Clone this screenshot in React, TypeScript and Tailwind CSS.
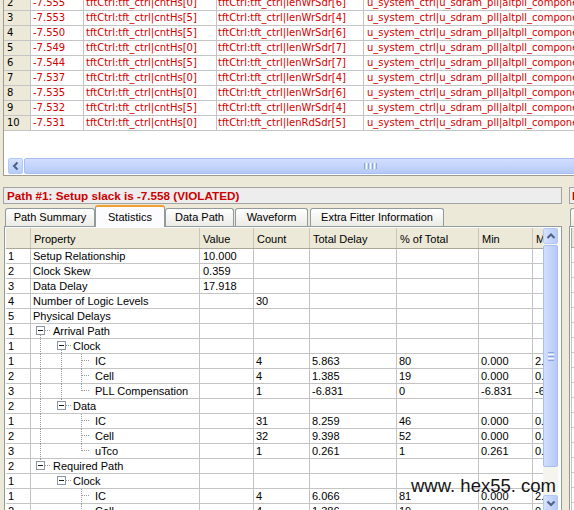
import React from 'react';

// top list of failing paths (scrolled so that row 2 is half hidden)
const topRows = [
  ['2', '-7.555', 'tftCtrl:tft_ctrl|cntHs[0]', 'tftCtrl:tft_ctrl|lenWrSdr[6]'],
  ['3', '-7.553', 'tftCtrl:tft_ctrl|cntHs[5]', 'tftCtrl:tft_ctrl|lenWrSdr[4]'],
  ['4', '-7.550', 'tftCtrl:tft_ctrl|cntHs[5]', 'tftCtrl:tft_ctrl|lenWrSdr[6]'],
  ['5', '-7.549', 'tftCtrl:tft_ctrl|cntHs[0]', 'tftCtrl:tft_ctrl|lenWrSdr[7]'],
  ['6', '-7.544', 'tftCtrl:tft_ctrl|cntHs[5]', 'tftCtrl:tft_ctrl|lenWrSdr[7]'],
  ['7', '-7.537', 'tftCtrl:tft_ctrl|cntHs[0]', 'tftCtrl:tft_ctrl|lenWrSdr[4]'],
  ['8', '-7.535', 'tftCtrl:tft_ctrl|cntHs[0]', 'tftCtrl:tft_ctrl|lenWrSdr[6]'],
  ['9', '-7.532', 'tftCtrl:tft_ctrl|cntHs[5]', 'tftCtrl:tft_ctrl|lenWrSdr[4]'],
  ['10', '-7.531', 'tftCtrl:tft_ctrl|cntHs[0]', 'tftCtrl:tft_ctrl|lenRdSdr[5]'],
];

type Seg = [number, number, number];
type StatRow = {
  n: string;
  label: string;
  lvl?: 1 | 2 | 3;
  segs?: Seg[];
  v?: string;
  c?: string;
  t?: string;
  p?: string;
  mn?: string;
  mx?: string;
};

// x of the guide lines: 9.5 (level 1), 30.5 (level 2), 50.5 (leaves)
const stats: StatRow[] = [
  { n: '1', label: 'Setup Relationship', v: '10.000' },
  { n: '2', label: 'Clock Skew', v: '0.359' },
  { n: '3', label: 'Data Delay', v: '17.918' },
  { n: '4', label: 'Number of Logic Levels', c: '30' },
  { n: '5', label: 'Physical Delays' },
  { n: '1', label: 'Arrival Path', lvl: 1, segs: [[9.5, 11, 15]] },
  { n: '1', label: 'Clock', lvl: 2, segs: [[9.5, 0, 15], [30.5, 11, 15]] },
  { n: '1', label: 'IC', lvl: 3, segs: [[9.5, 0, 15], [30.5, 0, 15], [50.5, 0, 15]], c: '4', t: '5.863', p: '80', mn: '0.000', mx: '2.196' },
  { n: '2', label: 'Cell', lvl: 3, segs: [[9.5, 0, 15], [30.5, 0, 15], [50.5, 0, 15]], c: '4', t: '1.385', p: '19', mn: '0.000', mx: '0.653' },
  { n: '3', label: 'PLL Compensation', lvl: 3, segs: [[9.5, 0, 15], [30.5, 0, 15], [50.5, 0, 7]], c: '1', t: '-6.831', p: '0', mn: '-6.831', mx: '-6.831' },
  { n: '2', label: 'Data', lvl: 2, segs: [[9.5, 0, 15], [30.5, 0, 2]] },
  { n: '1', label: 'IC', lvl: 3, segs: [[9.5, 0, 15], [50.5, 0, 15]], c: '31', t: '8.259', p: '46', mn: '0.000', mx: '0.910' },
  { n: '2', label: 'Cell', lvl: 3, segs: [[9.5, 0, 15], [50.5, 0, 15]], c: '32', t: '9.398', p: '52', mn: '0.000', mx: '0.651' },
  { n: '3', label: 'uTco', lvl: 3, segs: [[9.5, 0, 15], [50.5, 0, 7]], c: '1', t: '0.261', p: '1', mn: '0.261', mx: '0.261' },
  { n: '2', label: 'Required Path', lvl: 1, segs: [[9.5, 0, 2]] },
  { n: '1', label: 'Clock', lvl: 2, segs: [] },
  { n: '1', label: 'IC', lvl: 3, segs: [[50.5, 0, 15]], c: '4', t: '6.066', p: '81', mn: '0.000', mx: '2.196' },
  { n: '2', label: 'Cell', lvl: 3, segs: [[50.5, 0, 7]], c: '4', t: '1.386', p: '19', mn: '0.000', mx: '0.653' },
];

const tabs = [
  { label: 'Path Summary', w: 'w-[90px]' },
  { label: 'Statistics', w: 'w-[70px]', active: true },
  { label: 'Data Path', w: 'w-[69px]' },
  { label: 'Waveform', w: 'w-[73px] ml-[1px]' },
  { label: 'Extra Fitter Information', w: 'w-[134px] ml-[2px]' },
];

const statCols = 'grid grid-cols-[25px_169px_54px_56px_87px_82px_54px_40px]';

function Tree({ lvl, segs }: { lvl: 1 | 2 | 3; segs: Seg[] }) {
  const w = lvl === 1 ? 22 : lvl === 2 ? 42 : 64;
  const bx = lvl === 1 ? 5.5 : 26.5;
  return (
    <svg width={w} height={14} className="shrink-0 overflow-visible">
      {segs.map(([x, y1, y2], i) => (
        <line key={i} x1={x} y1={y1} x2={x} y2={y2} stroke="#9a9a9a" strokeDasharray="1 1" />
      ))}
      {lvl < 3 ? (
        <>
          <line x1={bx + 8.5} y1={6.5} x2={bx + 14} y2={6.5} stroke="#9a9a9a" strokeDasharray="1 1" />
          <rect x={bx} y={2.5} width={8} height={8} fill="#fff" stroke="#8a96a3" />
          <line x1={bx + 1.5} y1={6.5} x2={bx + 6.5} y2={6.5} stroke="#1a1a1a" />
        </>
      ) : (
        <line x1={51} y1={6.5} x2={59} y2={6.5} stroke="#9a9a9a" strokeDasharray="1 1" />
      )}
    </svg>
  );
}

function Chevron({ dir }: { dir: 'up' | 'down' | 'left' }) {
  const pts = dir === 'up' ? '3.5,9 7,5.5 10.5,9' : dir === 'down' ? '3.5,5.5 7,9 10.5,5.5' : '8.5,3.5 5,7 8.5,10.5';
  return (
    <svg width={13} height={14} viewBox="0 0 13 14">
      <polyline points={pts} fill="none" stroke="#4d6185" strokeWidth={2} />
    </svg>
  );
}

function HScrollbar() {
  return (
    <div className="h-[16px] mb-[1px] flex overflow-hidden">
      <div className="ml-[4px] w-[15px] h-[16px] shrink-0 rounded-[2px] border border-[#b3c8f4] bg-gradient-to-b from-[#d6e2fe] to-[#b7cbf7] flex items-center justify-center">
        <Chevron dir="left" />
      </div>
      <div className="ml-[1px] w-[692px] h-[16px] shrink-0 rounded-[2px] border border-[#a9bff2] bg-gradient-to-b from-[#d2defe] to-[#b6caf7] flex items-center justify-center gap-[1px]">
        <span className="w-[1px] h-[6px] bg-[#8ba7e3]" />
        <span className="w-[1px] h-[6px] bg-white" />
        <span className="w-[1px] h-[6px] bg-[#8ba7e3]" />
        <span className="w-[1px] h-[6px] bg-white" />
        <span className="w-[1px] h-[6px] bg-[#8ba7e3]" />
        <span className="w-[1px] h-[6px] bg-white" />
        <span className="w-[1px] h-[6px] bg-[#8ba7e3]" />
      </div>
    </div>
  );
}

function VScrollbar() {
  return (
    <div className="w-[15px] shrink-0 flex flex-col bg-[#f5f4ee]">
      <div className="h-[16px] rounded-[2px] border border-[#b3c8f4] bg-gradient-to-r from-[#d6e2fe] to-[#b7cbf7] flex items-center justify-center">
        <Chevron dir="up" />
      </div>
      <div className="mt-[1px] h-[222px] rounded-[2px] border border-[#a9bff2] bg-gradient-to-r from-[#d2defe] to-[#b6caf7] flex flex-col items-center justify-center gap-[1px]">
        <span className="w-[6px] h-[1px] bg-[#8ba7e3]" />
        <span className="w-[6px] h-[1px] bg-white" />
        <span className="w-[6px] h-[1px] bg-[#8ba7e3]" />
        <span className="w-[6px] h-[1px] bg-white" />
        <span className="w-[6px] h-[1px] bg-[#8ba7e3]" />
      </div>
      <div className="flex-1" />
      <div className="h-[16px] rounded-[2px] border border-[#b3c8f4] bg-gradient-to-r from-[#d6e2fe] to-[#b7cbf7] flex items-center justify-center">
        <Chevron dir="down" />
      </div>
    </div>
  );
}

export default function App() {
  return (
    <div className="relative w-[574px] h-[510px] overflow-hidden bg-[#ECE9D8] text-[11px] leading-none text-black font-['Liberation_Sans',Tahoma,sans-serif]">
      {/* path list */}
      <div className="ml-[3px] h-[176px] border-l border-b border-[#9f9d92] bg-white flex flex-col">
        <div className="flex-1 overflow-hidden font-['DejaVu_Sans',Tahoma,sans-serif] text-[10px]">
          <div className="-mt-[4px]">
            {topRows.map((r) => (
              <div key={r[0]} className="grid grid-cols-[27px_53px_133px_147px_300px] h-[15px] border-b border-[#c4c4c4] whitespace-nowrap">
                <div className="bg-[#ECE9D8] border-r border-[#c4c4c4] pl-[3px] flex items-center">{r[0]}</div>
                <div className="border-r border-[#c4c4c4] pl-[2px] flex items-center text-[#d40000]">{r[1]}</div>
                <div className="border-r border-[#c4c4c4] pl-[2px] flex items-center text-[#d40000] overflow-hidden">{r[2]}</div>
                <div className="border-r border-[#c4c4c4] pl-[1px] flex items-center text-[#d40000] overflow-hidden">{r[3]}</div>
                <div className="pl-[3px] flex items-center text-[#d40000] overflow-hidden">u_system_ctrl|u_sdram_pll|altpll_component|_clk0</div>
              </div>
            ))}
          </div>
        </div>
        <HScrollbar />
      </div>

      <div className="flex mt-[11px]">
        {/* path #1 report */}
        <div className="w-[562px] shrink-0 pl-[3px] flex flex-col">
          <div className="h-[17px] border border-[#a3a3a3] bg-[#ededed] pl-[3px] flex items-center font-bold text-[11.7px] text-[#cc0000] whitespace-nowrap">
            Path #1: Setup slack is -7.558 (VIOLATED)
          </div>

          <div className="h-[22px] pl-[2px] flex items-start">
            {tabs.map((t) =>
              t.active ? (
                <div key={t.label} className={`${t.w} relative z-10 mt-[1px] h-[22px] shrink-0 rounded-t-[3px] border-x border-t-2 border-x-[#919b9c] border-t-[#f0a030] bg-[#fcfcfe] flex items-center justify-center`}>
                  {t.label}
                </div>
              ) : (
                <div key={t.label} className={`${t.w} mt-[4px] h-[18px] shrink-0 rounded-t-[3px] border border-b-0 border-[#919b9c] bg-gradient-to-b from-white to-[#ecebe5] flex items-center justify-center whitespace-nowrap`}>
                  {t.label}
                </div>
              ),
            )}
          </div>

          <div className="ml-[1px] w-[558px] border border-[#919b9c] bg-[#fcfcfe] pt-[1px] pl-[1px] pr-[3px]">
            <div className="h-[283px] flex overflow-hidden">
              <div className="w-[537px] shrink-0 overflow-hidden bg-white">
                <div className={`${statCols} h-[21px] border-b border-[#aca899] bg-[#ECE9D8] whitespace-nowrap`}>
                  {['', 'Property', 'Value', 'Count', 'Total Delay', '% of Total', 'Min', 'Max'].map((h, i) => (
                    <div key={i} className="border-r border-[#cbc7b8] pl-[3px] pt-[2px] flex items-center overflow-hidden">{h}</div>
                  ))}
                </div>
                {stats.map((r, i) => (
                  <div key={i} className={`${statCols} h-[15px] border-b border-[#c4c4c4] whitespace-nowrap`}>
                    <div className="border-r border-[#c4c4c4] pl-[2px] flex items-center">{r.n}</div>
                    <div className="border-r border-[#c4c4c4] flex items-center">
                      {r.lvl ? <Tree lvl={r.lvl} segs={r.segs ?? []} /> : <span className="w-[2px]" />}
                      <span>{r.label}</span>
                    </div>
                    <div className="border-r border-[#c4c4c4] pl-[3px] flex items-center">{r.v}</div>
                    <div className="border-r border-[#c4c4c4] pl-[2px] flex items-center">{r.c}</div>
                    <div className="border-r border-[#c4c4c4] pl-[2px] flex items-center">{r.t}</div>
                    <div className="border-r border-[#c4c4c4] pl-[2px] flex items-center">{r.p}</div>
                    <div className="border-r border-[#c4c4c4] pl-[2px] flex items-center">{r.mn}</div>
                    <div className="pl-[2px] flex items-center">{r.mx}</div>
                  </div>
                ))}
              </div>
              <VScrollbar />
            </div>
          </div>
        </div>

        {/* neighbouring report, mostly off screen */}
        <div className="flex-1 flex flex-col overflow-hidden">
          <div className="ml-[7px] h-[17px] border-y border-l border-[#a3a3a3] bg-[#ededed] pl-[2px] flex items-center font-bold text-[11.7px] text-[#cc0000] whitespace-nowrap">
            Path #2
          </div>
          <div className="h-[22px]">
            <div className="ml-[8px] mt-[4px] h-[18px] rounded-tl-[3px] border-l border-t border-[#919b9c] bg-gradient-to-b from-white to-[#ecebe5]" />
          </div>
          <div className="ml-[7px] h-[300px] border-l border-t border-[#919b9c] bg-[#fcfcfe] pl-[1px] pt-[1px]">
            <div className="h-[20px] border-b border-l border-[#aca899] bg-[#ECE9D8]" />
            {stats.map((_, i) => (
              <div key={i} className="h-[15px] border-b border-l border-[#c4c4c4] bg-white" />
            ))}
          </div>
        </div>
      </div>

      {/* watermark */}
      <div className="absolute left-[411px] top-[477px] text-[18.5px] leading-none text-[#151515] whitespace-nowrap">
        www. hex55. com
      </div>
    </div>
  );
}
